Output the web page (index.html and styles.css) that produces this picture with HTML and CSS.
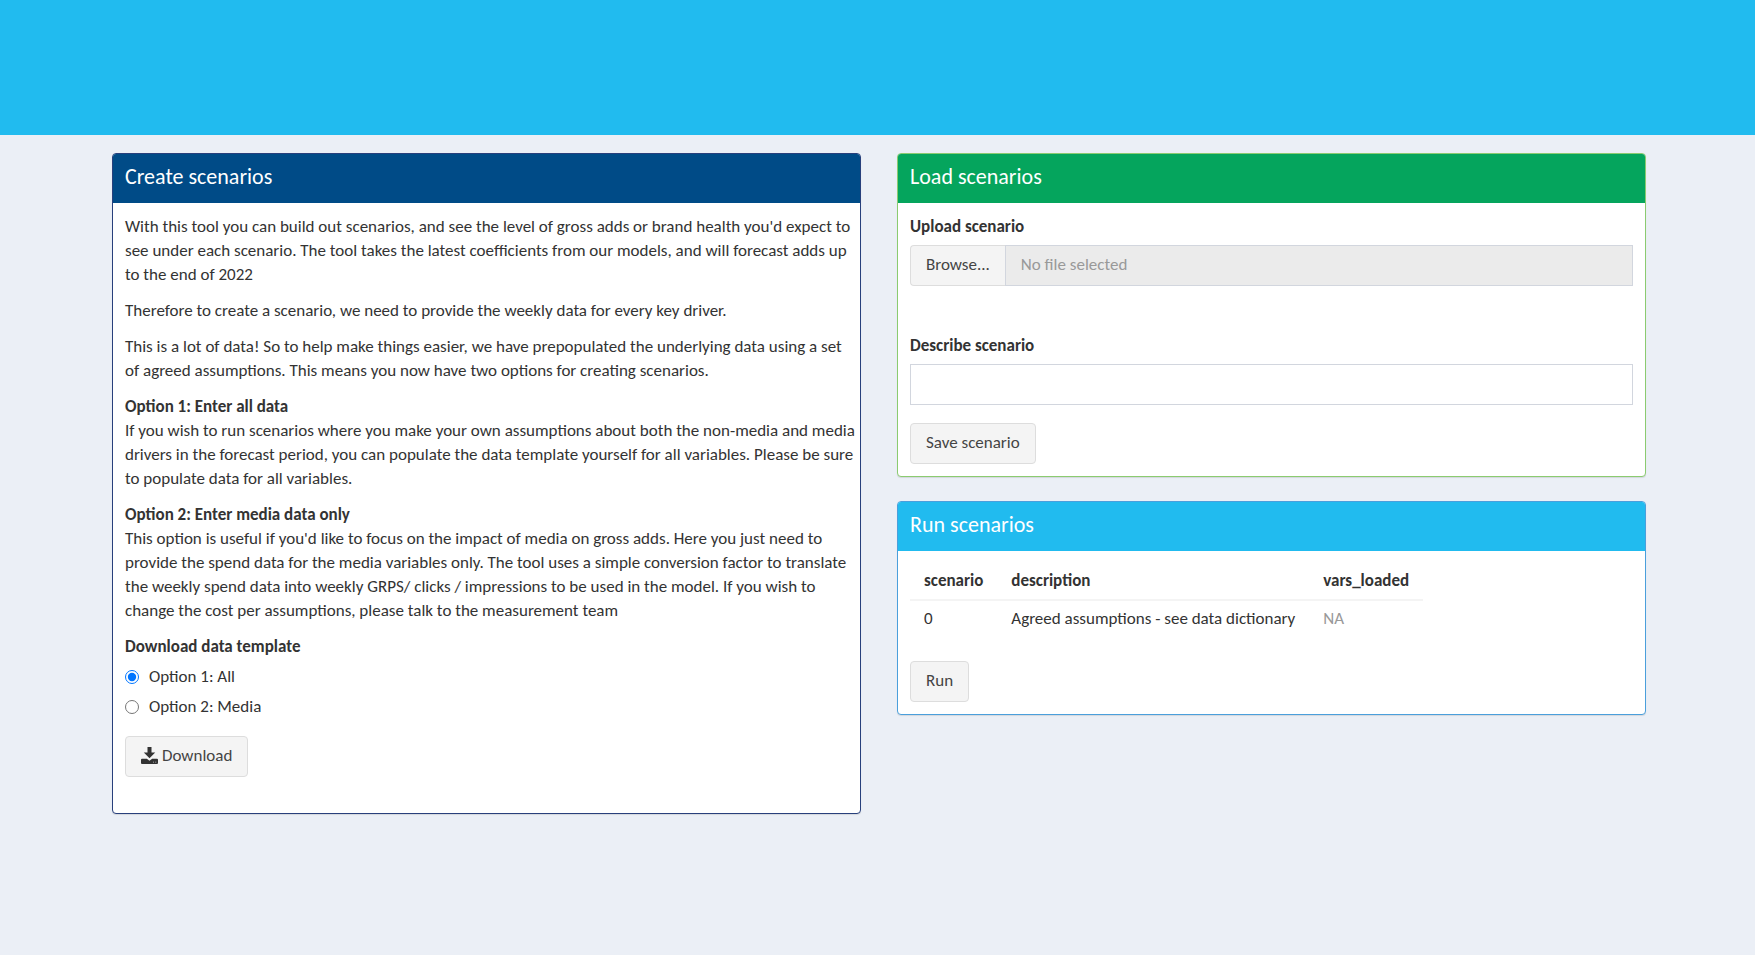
FILE: index.html
```
<!DOCTYPE html>
<html lang="en">
<head>
    <meta charset="UTF-8">
    <meta name="viewport" content="width=device-width, initial-scale=1.0">
    <title>Scenarios</title>
    <link rel="stylesheet" href="styles.css">
</head>
<body>
    <header class="banner"></header>
    <main class="content">
        <section class="box box-create">
            <h3 class="box-title">Create scenarios</h3>
            <div class="box-body">
                <p>With this tool you can build out scenarios, and see the level of gross adds or brand health you'd expect to see under each scenario. The tool takes the latest coefficients from our models, and will forecast adds up to the end of 2022</p>
                <p>Therefore to create a scenario, we need to provide the weekly data for every key driver.</p>
                <p>This is a lot of data! So to help make things easier, we have prepopulated the underlying data using a set of agreed assumptions. This means you now have two options for creating scenarios.</p>
                <p><b>Option 1: Enter all data</b><br>If you wish to run scenarios where you make your own assumptions about both the non-media and media drivers in the forecast period, you can populate the data template yourself for all variables. Please be sure to populate data for all variables.</p>
                <p><b>Option 2: Enter media data only</b><br>This option is useful if you'd like to focus on the impact of media on gross adds. Here you just need to provide the spend data for the media variables only. The tool uses a simple conversion factor to translate the weekly spend data into weekly GRPS/ clicks / impressions to be used in the model. If you wish to change the cost per assumptions, please talk to the measurement team</p>
                <fieldset class="radio-group">
                    <legend>Download data template</legend>
                    <label class="radio"><input type="radio" name="template" value="all" checked> Option 1: All</label>
                    <label class="radio"><input type="radio" name="template" value="media"> Option 2: Media</label>
                </fieldset>
                <button type="button" class="btn">
                    <svg class="icon" viewBox="0 0 17 17" aria-hidden="true">
                        <path d="M6.5 0h4v5.5h3.7L8.5 11.3 2.8 5.5h3.7z"/>
                        <path d="M1 11.8h4.8l2.7 2 2.7-2H16a1 1 0 0 1 1 1V16a1 1 0 0 1-1 1H1a1 1 0 0 1-1-1v-3.2a1 1 0 0 1 1-1zM12.2 14.8v.8h.8v-.8zM14.4 14.8v.8h.8v-.8z" fill-rule="evenodd"/>
                    </svg>
                    Download
                </button>
            </div>
        </section>
        <div class="column">
            <section class="box box-load">
                <h3 class="box-title">Load scenarios</h3>
                <div class="box-body">
                    <div class="form-group upload-group">
                        <label for="upload">Upload scenario</label>
                        <div class="input-group">
                            <label class="btn btn-file">Browse...<input type="file" id="upload" hidden></label>
                            <input type="text" class="form-control" aria-label="Selected file" placeholder="No file selected" readonly>
                        </div>
                    </div>
                    <div class="form-group">
                        <label for="describe">Describe scenario</label>
                        <input type="text" class="form-control" id="describe">
                    </div>
                    <button type="button" class="btn">Save scenario</button>
                </div>
            </section>
            <section class="box box-run">
                <h3 class="box-title">Run scenarios</h3>
                <div class="box-body">
                    <table class="scenario-table">
                        <thead>
                            <tr><th>scenario</th><th>description</th><th>vars_loaded</th></tr>
                        </thead>
                        <tbody>
                            <tr><td>0</td><td>Agreed assumptions - see data dictionary</td><td class="na">NA</td></tr>
                        </tbody>
                    </table>
                    <button type="button" class="btn">Run</button>
                </div>
            </section>
        </div>
    </main>
</body>
</html>
```
FILE: styles.css
```
* {
    box-sizing: border-box;
}
body {
    margin: 0;
    min-height: 100vh;
    background-color: #ebeff6;
    color: #333;
    font-family: Calibri, Carlito, Lato, sans-serif;
    font-size: 17px;
    line-height: 24px;
}
.banner {
    height: 135px;
    background-color: #21bbef;
}
.content {
    display: grid;
    grid-template-columns: 1fr 1fr;
    gap: 36px;
    align-items: start;
    padding: 18px 109px 24px 112px;
}
.column {
    display: grid;
    gap: 24px;
}
.box {
    background: #fff;
    border: 1px solid;
    border-radius: 4px;
    box-shadow: 0 1px 1px rgba(0, 0, 0, 0.1);
}
.box-create {
    border-color: #28407c;
    padding-bottom: 24px;
}
.box-load {
    border-color: #8bcb70;
}
.box-run {
    border-color: #4a9fdc;
}
.box-title {
    margin: 0;
    padding: 11px 12px 14px;
    border-radius: 3px 3px 0 0;
    color: #fff;
    font-size: 22px;
    font-weight: 400;
    line-height: 24px;
}
.box-create .box-title {
    background-color: #004b87;
}
.box-load .box-title {
    background-color: #05a55d;
}
.box-run .box-title {
    background-color: #21bbef;
}
.box-body {
    padding: 12px;
}
.box-create .box-body {
    padding-right: 4px;
}
.box-body p {
    margin: 0 0 12px;
}
.radio-group {
    display: grid;
    gap: 6px;
    margin: 0 0 17px;
    padding: 0;
    border: 0;
}
.radio-group legend {
    margin-bottom: 6px;
    padding: 0;
    font-weight: 700;
}
.radio {
    display: flex;
    align-items: center;
    gap: 10px;
}
.radio input {
    width: 14px;
    height: 14px;
    margin: 0;
}
.btn {
    display: flex;
    align-items: center;
    gap: 4px;
    height: 41px;
    padding: 0 15px 2px;
    border: 1px solid #ddd;
    border-radius: 4px;
    background-color: #f4f4f4;
    color: #444;
    font: inherit;
    cursor: pointer;
}
.icon {
    width: 17px;
    height: 17px;
    fill: #333;
}
.form-group {
    margin-bottom: 18px;
}
.form-group > label {
    display: block;
    margin-bottom: 6px;
    font-weight: 700;
}
.upload-group {
    margin-bottom: 48px;
}
.input-group {
    display: flex;
}
.form-control {
    display: block;
    width: 100%;
    height: 41px;
    padding: 0 15px 2px;
    border: 1px solid #d2d6de;
    border-radius: 0;
    background: #fff;
    color: #555;
    font: inherit;
}
.form-control[readonly] {
    background: #ebebeb;
}
.form-control::placeholder {
    color: #999;
}
.btn-file {
    flex: none;
    border-right: 0;
    border-radius: 4px 0 0 4px;
}
.scenario-table {
    margin-bottom: 24px;
    border-collapse: collapse;
}
.scenario-table th,
.scenario-table td {
    padding: 6px 14px;
    text-align: left;
}
.scenario-table th {
    border-bottom: 2px solid #f4f4f4;
}
.scenario-table .na {
    color: #999;
}
```
